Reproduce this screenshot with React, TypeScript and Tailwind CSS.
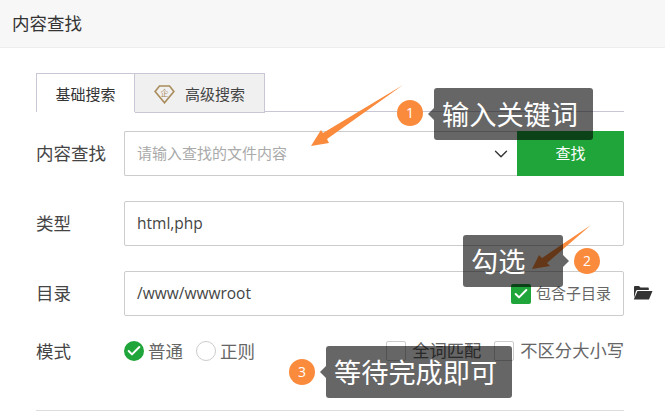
import { ChevronDown, Check } from 'lucide-react'

const fontStack = 'font-["Open_Sans","Noto_Sans_CJK_SC",sans-serif]'

// Diamond badge on the paid tab
function DiamondIcon() {
  return (
    <svg width="21" height="19" viewBox="0 0 21 19" fill="none">
      <path d="M5.5 1h10l4.4 5.4L10.5 17.8 1.1 6.4z" stroke="#a98c5c" strokeWidth="1.6" />
      <text x="10.5" y="11" fontSize="8" fill="#a98c5c" textAnchor="middle">
        企
      </text>
    </svg>
  )
}

function FolderIcon({ className }: { className?: string }) {
  return (
    <svg className={className} width="20" height="15" viewBox="0 0 20 15" fill="#333">
      <path d="M1 13V2.2C1 1.5 1.5 1 2.2 1H6l1.5 1.5h7.3c.6 0 1 .4 1 1V5H4.5C3.800 5 3.300 5.400 3 6L1 13z" />
      <path d="M4.500 6H19.500L16 14.500H.8z" />
    </svg>
  )
}

function Radio({ checked, label }: { checked?: boolean; label: string }) {
  return (
    <div className="flex items-center gap-[4px]">
      {checked ? (
        <span className="w-5 h-5 rounded-full bg-[#20a53a] flex items-center justify-center">
          <Check className="w-4 h-4 text-white" strokeWidth={3} />
        </span>
      ) : (
        <span className="w-5 h-5 rounded-full border border-[#ccc] bg-white" />
      )}
      <span className="text-[17.5px] leading-5 text-[#666]">{label}</span>
    </div>
  )
}

function CheckBox({ label }: { label: string }) {
  return (
    <div className="flex items-center gap-[6px]">
      <span className="w-5 h-5 rounded-[2px] border border-[#ccc] bg-white" />
      <span className="text-[17.3px] leading-5 text-[#666]">{label}</span>
    </div>
  )
}

function Callout({
  text,
  side,
  className,
}: {
  text: string
  side: 'left' | 'right'
  className: string
}) {
  return (
    <div className={`absolute z-10 ${className}`}>
      <div className="relative h-[52px] pl-2 pt-[3px] rounded-[3px] bg-black/60 flex items-center text-[27.2px] text-white whitespace-nowrap">
        {text}
        <span
          className={
            side === 'left'
              ? 'absolute left-[-6px] top-[20px] border-y-[6px] border-r-[6px] border-y-transparent border-r-black/60'
              : 'absolute right-[-6px] top-[20px] border-y-[6px] border-l-[6px] border-y-transparent border-l-black/60'
          }
        />
      </div>
    </div>
  )
}

function NumberDot({ num, className }: { num: number; className: string }) {
  return (
    <span
      className={`absolute w-[26px] h-[26px] rounded-full bg-[#fa8a3c] text-white text-sm flex items-center justify-center ${className}`}
    >
      {num}
    </span>
  )
}

export default function App() {
  return (
    <div className={`relative w-[665px] h-[415px] overflow-hidden bg-white ${fontStack}`}>
      {/* Title bar */}
      <div className="h-[48px] pl-3 bg-[#f7f7f7] border-b border-[#eee] flex items-center text-[17.5px] text-[#333]">
        内容查找
      </div>

      <div className="pl-9 w-[624px]">
        {/* Tabs */}
        <div className="mt-[25px] h-[39px] flex border-b border-[#c9c7d6]">
          <div className="w-[99px] h-[39px] pt-[2px] border border-b-0 border-[#c9c7d6] bg-white flex items-center justify-center text-[15px] text-[#333]">
            基础搜索
          </div>
          <div className="w-[130px] h-[40px] pt-[2px] border border-l-0 border-[#c9c7d6] bg-[#f0f0f0] flex items-center justify-center gap-[10px] text-[15px] text-[#444]">
            <DiamondIcon />
            高级搜索
          </div>
        </div>

        {/* Keyword row */}
        <div className="mt-[19px] flex items-center">
          <label className="w-[88px] text-[17.5px] text-[#444]">内容查找</label>
          <div className="flex-1 h-[45px] flex">
            <div className="flex-1 border border-r-0 border-[#ccc] rounded-l-[2px] pl-3 pr-[5px] flex items-center justify-between text-[15px] text-[#aaa]">
              请输入查找的文件内容
              <ChevronDown className="w-[22px] h-[22px] text-[#333]" strokeWidth={1.5} />
            </div>
            <button className="w-[107px] bg-[#20a53a] text-white text-[15px]">查找</button>
          </div>
        </div>

        {/* Type row */}
        <div className="mt-[25px] flex items-center">
          <label className="w-[88px] text-[17.5px] text-[#444]">类型</label>
          <div className="flex-1 h-[45px] border border-[#ccc] rounded-[2px] px-3 flex items-center text-[15.5px] text-[#444]">
            html,php
          </div>
        </div>

        {/* Directory row */}
        <div className="mt-[25px] flex items-center relative">
          <label className="w-[88px] text-[17.5px] text-[#444]">目录</label>
          <div className="flex-1 h-[45px] border border-[#ccc] rounded-[2px] pl-3 pr-3 flex items-center justify-between text-[15.5px] text-[#444]">
            /www/wwwroot
            <div className="flex items-center gap-[5px]">
              <span className="w-5 h-5 rounded-[2px] bg-[#20a53a] flex items-center justify-center">
                <Check className="w-4 h-4 text-white" strokeWidth={3} />
              </span>
              <span className="text-[15px] text-[#666]">包含子目录</span>
            </div>
          </div>
          <FolderIcon className="absolute left-[597px] top-[14px]" />
        </div>

        {/* Mode row */}
        <div className="mt-[22px] flex items-center">
          <label className="w-[88px] text-[17.5px] text-[#444]">模式</label>
          <div className="flex gap-[13px]">
            <Radio checked label="普通" />
            <Radio label="正则" />
          </div>
          <div className="ml-auto flex gap-[13px]">
            <CheckBox label="全词匹配" />
            <CheckBox label="不区分大小写" />
          </div>
        </div>

        <div className="mt-[46px] border-t border-[#ddd]" />
      </div>

      {/* Annotation arrows */}
      <svg className="absolute left-0 top-0 pointer-events-none" width="665" height="415">
        <path d="M403 85 L323 133 L321 130 L311 146 L329 143 L327 139 Z" fill="#fa8a3c" />
        <path d="M591 225 L542 258 L539 255 L532 269 L550 266 L547 263 Z" fill="#fa8a3c" />
      </svg>

      <Callout text="输入关键词" side="left" className="left-[434px] top-[88px] w-[159px]" />
      <NumberDot num={1} className="left-[397px] top-[100px]" />
      <Callout text="勾选" side="right" className="left-[463px] top-[235px] w-[100px]" />
      <NumberDot num={2} className="left-[574px] top-[248px]" />
      <Callout text="等待完成即可" side="left" className="left-[326px] top-[346px] w-[186px]" />
      <NumberDot num={3} className="left-[289px] top-[359px]" />
    </div>
  )
}
